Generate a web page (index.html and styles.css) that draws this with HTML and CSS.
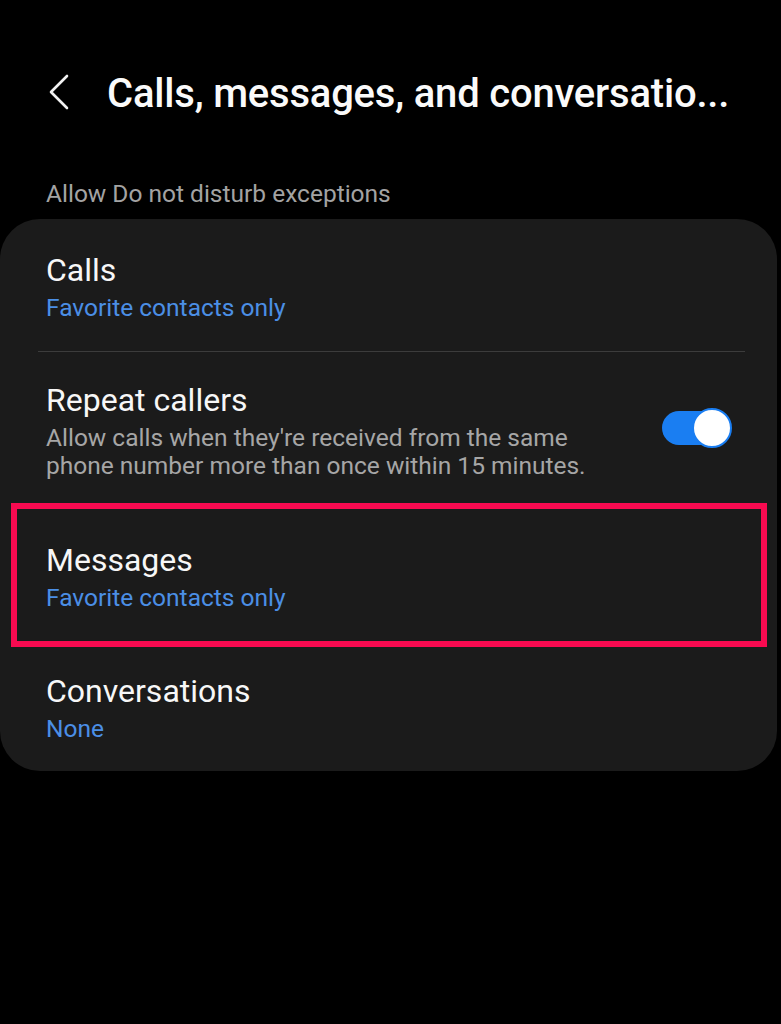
FILE: index.html
```html
<!DOCTYPE html>
<html lang="en">
<head>
<meta charset="utf-8">
<title>Calls, messages, and conversations</title>
<link rel="stylesheet" href="styles.css">
</head>
<body>
<div class="screen">
  <header class="topbar">
    <button class="back" aria-label="Back">
      <svg width="22" height="36" viewBox="0 0 22 36"><path d="M19 2 L3 18 L19 34" fill="none" stroke="#f2f2f2" stroke-width="2.6" stroke-linecap="round" stroke-linejoin="round"/></svg>
    </button>
    <h1 class="title">Calls, messages, and conversatio...</h1>
  </header>

  <div class="section-label">Allow Do not disturb exceptions</div>

  <section class="card">
    <div class="row row-calls">
      <div class="row-text">
        <div class="row-title">Calls</div>
        <div class="row-sub">Favorite contacts only</div>
      </div>
    </div>
    <div class="divider"></div>
    <div class="row row-repeat">
      <div class="row-text">
        <div class="row-title">Repeat callers</div>
        <div class="row-desc">Allow calls when they're received from the same phone number more than once within 15 minutes.</div>
      </div>
      <div class="switch">
        <div class="switch-track"><div class="switch-thumb"></div></div>
      </div>
    </div>
    <div class="row row-messages highlighted">
      <div class="row-text">
        <div class="row-title">Messages</div>
        <div class="row-sub">Favorite contacts only</div>
      </div>
    </div>
    <div class="row row-conv">
      <div class="row-text">
        <div class="row-title">Conversations</div>
        <div class="row-sub">None</div>
      </div>
    </div>
  </section>
</div>
</body>
</html>
```

FILE: styles.css
```css
html, body {
  margin: 0;
  padding: 0;
  background: #000;
}
body {
  font-family: Roboto, "Noto Sans", "Liberation Sans", sans-serif;
  color: #f7f7f7;
  width: 781px;
  height: 1024px;
  overflow: hidden;
}
.screen {
  display: flex;
  flex-direction: column;
}
.topbar {
  display: flex;
  align-items: center;
  padding: 72px 0 0 48px;
  height: 44px;
}
.back {
  background: none;
  border: 0;
  padding: 0;
  width: 22px;
  height: 36px;
  display: flex;
  margin-right: 37px;
  margin-top: -4px;
}
.title {
  margin: 0;
  font-size: 40px;
  font-weight: 500;
  line-height: 44px;
  color: #fafafa;
  white-space: nowrap;
  letter-spacing: -0.2px;
}
.section-label {
  margin: 64px 0 11px 46px;
  font-size: 24.5px;
  line-height: 28px;
  color: #a3a3a3;
}
.card {
  background: #1b1b1b;
  border-radius: 40px;
  width: 777px;
  display: flex;
  flex-direction: column;
}
.row {
  display: flex;
  align-items: center;
  padding: 0 49px 0 46px;
}
.row-text {
  flex: 1;
  min-width: 0;
}
.row-title {
  font-size: 32px;
  line-height: 40px;
  color: #f7f7f7;
}
.row-sub {
  font-size: 24.5px;
  line-height: 36px;
  color: #4b8fe6;
}
.row-desc {
  font-size: 24.5px;
  line-height: 28px;
  color: #a6a6a6;
  padding-top: 4px;
  max-width: 545px;
}
.row-calls { padding-top: 31px; padding-bottom: 25px; }
.row-repeat { padding-top: 28px; padding-bottom: 28px; }
.row-messages { padding-top: 32px; padding-bottom: 27px; }
.row-conv { padding-top: 28px; padding-bottom: 24px; }
.divider {
  height: 1px;
  background: #3c3c3c;
  margin: 0 32px 0 38px;
}
.highlighted {
  position: relative;
}
.highlighted::after {
  content: "";
  position: absolute;
  top: -5px;
  bottom: -4px;
  left: 11px;
  right: 10px;
  border: 6px solid #f80a50;
  pointer-events: none;
}
.switch {
  display: flex;
  align-items: center;
  margin-top: -4px;
}
.switch-track {
  width: 66px;
  height: 34px;
  border-radius: 17px;
  background: #1a7ef2;
  display: flex;
  align-items: center;
}
.switch-thumb {
  width: 36px;
  height: 36px;
  border-radius: 50%;
  background: #fff;
  border: 2px solid #1a7ef2;
  margin-left: auto;
  margin-right: -4px;
}
```
